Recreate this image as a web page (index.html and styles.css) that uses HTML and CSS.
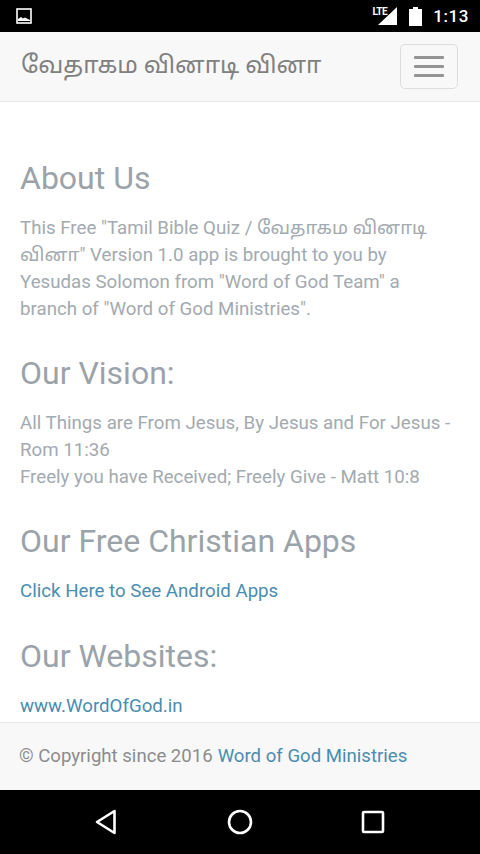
FILE: index.html
```html
<!DOCTYPE html>
<html lang="ta">
<head>
    <meta charset="UTF-8">
    <meta name="viewport" content="width=device-width, initial-scale=1.0">
    <title>Tamil Bible Quiz - About Us</title>
    <link rel="stylesheet" href="styles.css">
</head>
<body>

<!-- Android status bar -->
<div class="status-bar">
    <svg class="status-picture" width="16" height="16" viewBox="0 0 16 16">
        <rect x="1" y="1" width="14" height="14" fill="none" stroke="#fff" stroke-width="1.6"/>
        <path d="M2 13 L2 11 L5 9 L7 10.5 L9 9.5 L14 12 L14 13 Z" fill="#fff"/>
    </svg>
    <div class="status-right">
        <span class="status-lte">LTE</span>
        <svg class="status-signal" width="20" height="18" viewBox="0 0 20 18">
            <path d="M19 0 L19 18 L0 18 Z" fill="#fff"/>
        </svg>
        <svg class="status-battery" width="13" height="19" viewBox="0 0 13 19">
            <path d="M4 0 H9 V2 H13 V19 H0 V2 H4 Z" fill="#fff"/>
        </svg>
        <span class="status-time">1:13</span>
    </div>
</div>

<nav class="navbar">
    <a class="navbar-brand">வேதாகம வினாடி வினா</a>
    <button class="navbar-toggle">
        <span class="icon-bar"></span>
        <span class="icon-bar"></span>
        <span class="icon-bar"></span>
    </button>
</nav>

<div class="content">
    <h3 class="about-title">About Us</h3>
    <p>This Free "Tamil Bible Quiz / வேதாகம வினாடி வினா" Version 1.0 app is brought to you by Yesudas Solomon from "Word of God Team" a branch of "Word of God Ministries".</p>

    <h3>Our Vision:</h3>
    <p>All Things are From Jesus, By Jesus and For Jesus - Rom 11:36<br>Freely you have Received; Freely Give - Matt 10:8</p>

    <h3>Our Free Christian Apps</h3>
    <p><a href="#">Click Here to See Android Apps</a></p>

    <h3 class="websites-title">Our Websites:</h3>
    <p><a href="#">www.WordOfGod.in</a></p>
</div>

<footer>
    © Copyright since 2016 <a href="#">Word of God Ministries</a>
</footer>

<!-- Android navigation bar -->
<div class="nav-bar">
    <svg width="24" height="26" viewBox="0 0 24 26">
        <path d="M20.5 2 L20.5 24 L3 13 Z" fill="none" stroke="#fff" stroke-width="2.6" stroke-linejoin="round"/>
    </svg>
    <svg width="26" height="26" viewBox="0 0 26 26">
        <circle cx="13" cy="13" r="11" fill="none" stroke="#fff" stroke-width="2.6"/>
    </svg>
    <svg width="24" height="24" viewBox="0 0 24 24">
        <rect x="2" y="2" width="20" height="20" rx="1" fill="none" stroke="#fff" stroke-width="2.6"/>
    </svg>
</div>

</body>
</html>
```

FILE: styles.css
```css
* {
    box-sizing: border-box;
}
body {
    margin: 0;
    height: 854px;
    display: flex;
    flex-direction: column;
    overflow: hidden;
    font-family: 'Roboto', 'Noto Sans Tamil', 'Noto Sans', sans-serif;
    background-color: #fff;
    color: #a3aab0;
}
.status-bar {
    height: 32px;
    flex: none;
    background-color: #000;
    display: flex;
    justify-content: space-between;
    align-items: center;
    padding: 0 11px 0 16px;
}
.status-right {
    display: flex;
    align-items: center;
}
.status-lte {
    font-size: 10px;
    font-weight: bold;
    color: #fff;
    margin-right: -9px;
    margin-top: -10px;
    letter-spacing: -0.5px;
}
.status-signal {
    margin-right: 11px;
}
.status-battery {
    margin-right: 11px;
}
.status-time {
    color: #fff;
    font-size: 17px;
    font-weight: 500;
    letter-spacing: 0.6px;
}
.navbar {
    height: 70px;
    flex: none;
    display: flex;
    justify-content: space-between;
    align-items: center;
    padding: 0 22px 0 21px;
    background-color: #f8f8f8;
    border-bottom: 1px solid #e7e7e7;
}
.navbar-brand {
    font-size: 24px;
    color: #808080;
}
.navbar-toggle {
    width: 58px;
    height: 45px;
    padding: 0 13px;
    background: transparent;
    border: 1px solid #ddd;
    border-radius: 5px;
    display: flex;
    flex-direction: column;
    justify-content: center;
    gap: 6px;
}
.icon-bar {
    display: block;
    height: 3px;
    border-radius: 1px;
    background-color: #949494;
}
.content {
    flex: 1;
    min-height: 0;
    overflow: hidden;
    padding: 0 20px;
}
h3 {
    font-size: 32px;
    font-weight: 400;
    line-height: 36px;
    margin: 32px 0 0;
    color: #9ba3aa;
}
.about-title {
    margin-top: 58px;
}
.websites-title {
    margin-top: 33px;
}
h3 + p {
    margin-top: 19px;
}
p {
    font-size: 18.7px;
    line-height: 27px;
    margin: 0;
}
a {
    color: #4a8db0;
    text-decoration: none;
}
footer {
    height: 68px;
    flex: none;
    display: flex;
    align-items: center;
    gap: 5px;
    padding: 0 19px 2px;
    font-size: 18.6px;
    color: #8c8c8c;
    background-color: #f8f8f8;
    border-top: 1px solid #e7e7e7;
}
.nav-bar {
    height: 64px;
    flex: none;
    background-color: #000;
    display: flex;
    align-items: center;
    padding: 0 95px 0 94px;
    justify-content: space-between;
}
```
